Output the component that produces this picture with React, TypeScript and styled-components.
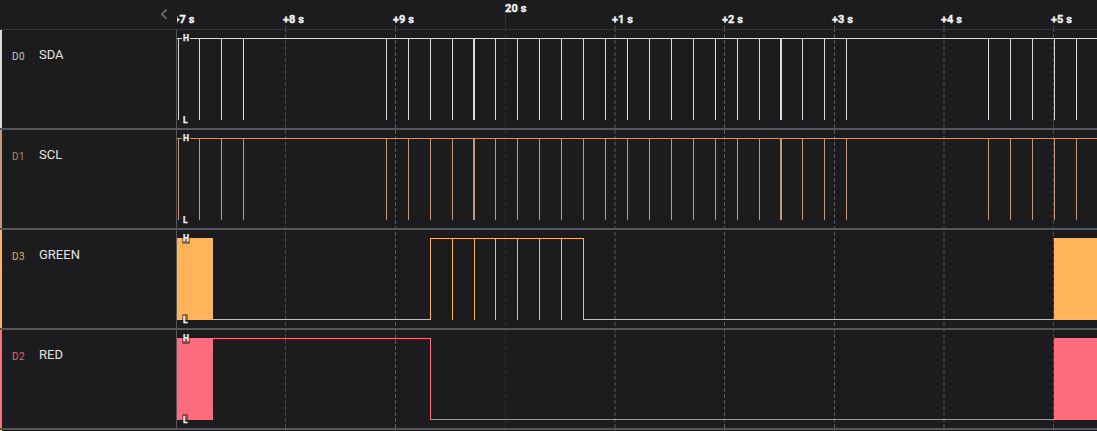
import React from 'react';
import styled, { createGlobalStyle } from 'styled-components';

const GlobalStyle = createGlobalStyle`
  html, body { margin: 0; background: #1c1c1e; overflow: hidden; }
  * { box-sizing: border-box; }
`;

const Analyzer = styled.main`
  position: relative;
  z-index: 0;
  width: 1097px;
  height: 431px;
  overflow: hidden;
  background: #1c1c1e;
  font-family: Roboto, sans-serif;
`;

const Header = styled.header`
  display: flex;
  height: 30px;
  border-bottom: 1px solid #36363b;
`;

const HeaderSide = styled.div`
  flex: 0 0 177px;
  display: flex;
  justify-content: flex-end;
  padding: 8px 8px 0 0;
`;

const CollapseIcon = styled.svg`
  display: block;
  width: 10px;
  height: 12px;
`;

const Ruler = styled.svg`
  display: block;
  width: 920px;
  height: 29px;
`;

const TickLabel = styled.text`
  fill: #f4f4f4;
  stroke: #f4f4f4;
  stroke-width: 0.35px;
  font: 700 11px Roboto, sans-serif;
  letter-spacing: 0.1px;
`;

const GridLines = styled.svg`
  position: absolute;
  z-index: -1;
  left: 177px;
  top: 0;
  width: 920px;
  height: 431px;
  pointer-events: none;
`;

const Row = styled.section`
  height: 100px;
  border-bottom: 2px solid #55555c;
`;

const RowBody = styled.div`
  display: flex;
  height: 98px;
`;

const ChannelPanel = styled.div<{ $color: string }>`
  flex: 0 0 177px;
  display: flex;
  align-items: flex-start;
  padding: 17px 0 0 10px;
  border-left: 2px solid ${(p) => p.$color};
  border-right: 1px solid #55555a;
`;

const ChannelId = styled.span<{ $color: string }>`
  width: 27px;
  padding-top: 2px;
  color: ${(p) => p.$color};
  font-size: 10px;
  line-height: 16px;
  letter-spacing: 0.4px;
`;

const ChannelName = styled.span`
  color: #e4e4e4;
  font-size: 13px;
  line-height: 16px;
`;

const Plot = styled.svg`
  display: block;
  width: 920px;
  height: 98px;
`;

const LevelText = styled.text`
  fill: #f4f4f4;
  stroke: #f4f4f4;
  stroke-width: 0.25px;
  font: 700 8.5px Roboto, sans-serif;
`;

const NextRow = styled.div`
  height: 1px;
  border-left: 2px solid #ffdc5c;
`;

type Tick = { x: number; label: string; labelX: number; major?: boolean; wide?: boolean; color: string };

const ticks: Tick[] = [
  { x: -1, label: '+7 s', labelX: -3.5, color: 'none' },
  { x: 108, label: '+8 s', labelX: 106, color: '#4c4c4f' },
  { x: 218, label: '+9 s', labelX: 216, color: '#59595c' },
  { x: 328, label: '20 s', labelX: 328, major: true, color: '#303033' },
  { x: 437, label: '+1 s', labelX: 435, wide: true, color: '#3a3a3d' },
  { x: 547, label: '+2 s', labelX: 545, color: '#59595c' },
  { x: 657, label: '+3 s', labelX: 655, color: '#59595c' },
  { x: 766, label: '+4 s', labelX: 764, wide: true, color: '#3a3a3d' },
  { x: 876, label: '+5 s', labelX: 874, color: '#4c4c4f' },
];

type Block = { x: number; width: number };
type Pulse = { x: number; width?: number };
type Segment = { from: number; to: number; high: boolean };
type Channel = {
  id: string;
  name: string;
  color: string;
  idColor: string;
  segments: Segment[];
  pulses: Pulse[];
  blocks: Block[];
};

const busPulses: Pulse[] = [
  1, 22, 44, 66, 209, 231, 253, 275, 296, 318, 340, 362, 384, 406, 428, 450,
  472, 494, 516, 538, 560, 582, 603, 625, 647, 669, 811, 833, 855, 877, 899,
].map((x) => ({ x, width: x === 296 || x === 603 ? 2 : 1 }));

const bursts: Block[] = [{ x: 0, width: 36 }, { x: 877, width: 43 }];

const channels: Channel[] = [
  { id: 'D0', name: 'SDA', color: '#dcdcdc', idColor: '#c8c8c8', segments: [{ from: 0, to: 920, high: true }], pulses: busPulses, blocks: [] },
  { id: 'D1', name: 'SCL', color: '#ca9678', idColor: '#b58468', segments: [{ from: 0, to: 920, high: true }], pulses: busPulses, blocks: [] },
  {
    id: 'D3', name: 'GREEN', color: '#ffb45c', idColor: '#f0a955',
    segments: [{ from: 36, to: 254, high: false }, { from: 253, to: 407, high: true }, { from: 406, to: 877, high: false }],
    pulses: [253, 275, 297, 318, 340, 362, 384, 406].map((x) => ({ x })),
    blocks: bursts,
  },
  {
    id: 'D2', name: 'RED', color: '#ff6c7d', idColor: '#e86473',
    segments: [{ from: 36, to: 254, high: true }, { from: 253, to: 877, high: false }],
    pulses: [{ x: 253 }],
    blocks: bursts,
  },
];

function Trace({ channel }: { channel: Channel }) {
  const hasBlocks = channel.blocks.length > 0;
  return (
    <Plot viewBox="0 0 920 98" shapeRendering="crispEdges">
      <g fill={channel.color}>
        {channel.segments.map((s) => (
          <rect key={s.from} x={s.from} y={s.high ? 8 : 89} width={s.to - s.from} height={1} />
        ))}
        {channel.pulses.map((p) => (
          <rect key={p.x} x={p.x} y={8} width={p.width ?? 1} height={82} />
        ))}
        {channel.blocks.map((b) => (
          <rect key={b.x} x={b.x} y={8} width={b.width} height={82} />
        ))}
      </g>
      <g shapeRendering="auto">
        {hasBlocks ? (
          <g fill="#1c1c1e" fillOpacity={0.5}>
            <rect x={5} y={4} width={8} height={10} rx={1.5} />
            <rect x={5} y={84} width={6} height={10} rx={1.5} />
          </g>
        ) : (
          <rect x={5} y={5} width={8} height={8} fill="#1c1c1e" />
        )}
        <LevelText x={6} y={11.4}>H</LevelText>
        <LevelText x={6} y={93.4}>L</LevelText>
      </g>
    </Plot>
  );
}

export default function App() {
  return (
    <>
      <GlobalStyle />
      <Analyzer>
        <GridLines viewBox="0 0 920 431" shapeRendering="crispEdges">
          {ticks.map((t) => {
            const x = t.x + (t.wide ? 1 : 0.5);
            const w = t.wide ? 2 : 1;
            return (
              <g key={t.label} stroke={t.color} strokeWidth={w}>
                <line x1={x} x2={x} y1={t.major ? 14 : 26} y2={32} />
                <line x1={x} x2={x} y1={34} y2={431} strokeDasharray="4 2" />
              </g>
            );
          })}
        </GridLines>
        <Header>
          <HeaderSide>
            <CollapseIcon viewBox="0 0 10 12" fill="none" stroke="#68686a" strokeWidth={1.8}>
              <path d="M7.6 1.5 2.8 6.2l4.8 4.7" />
            </CollapseIcon>
          </HeaderSide>
          <Ruler viewBox="0 0 920 29">
            {ticks.map((t) => (
              <TickLabel key={t.label} x={t.labelX} y={t.major ? 12 : 23}>{t.label}</TickLabel>
            ))}
          </Ruler>
        </Header>
        {channels.map((c) => (
          <Row key={c.id}>
            <RowBody>
              <ChannelPanel $color={c.color}>
                <ChannelId $color={c.idColor}>{c.id}</ChannelId>
                <ChannelName>{c.name}</ChannelName>
              </ChannelPanel>
              <Trace channel={c} />
            </RowBody>
          </Row>
        ))}
        <NextRow />
      </Analyzer>
    </>
  );
}
